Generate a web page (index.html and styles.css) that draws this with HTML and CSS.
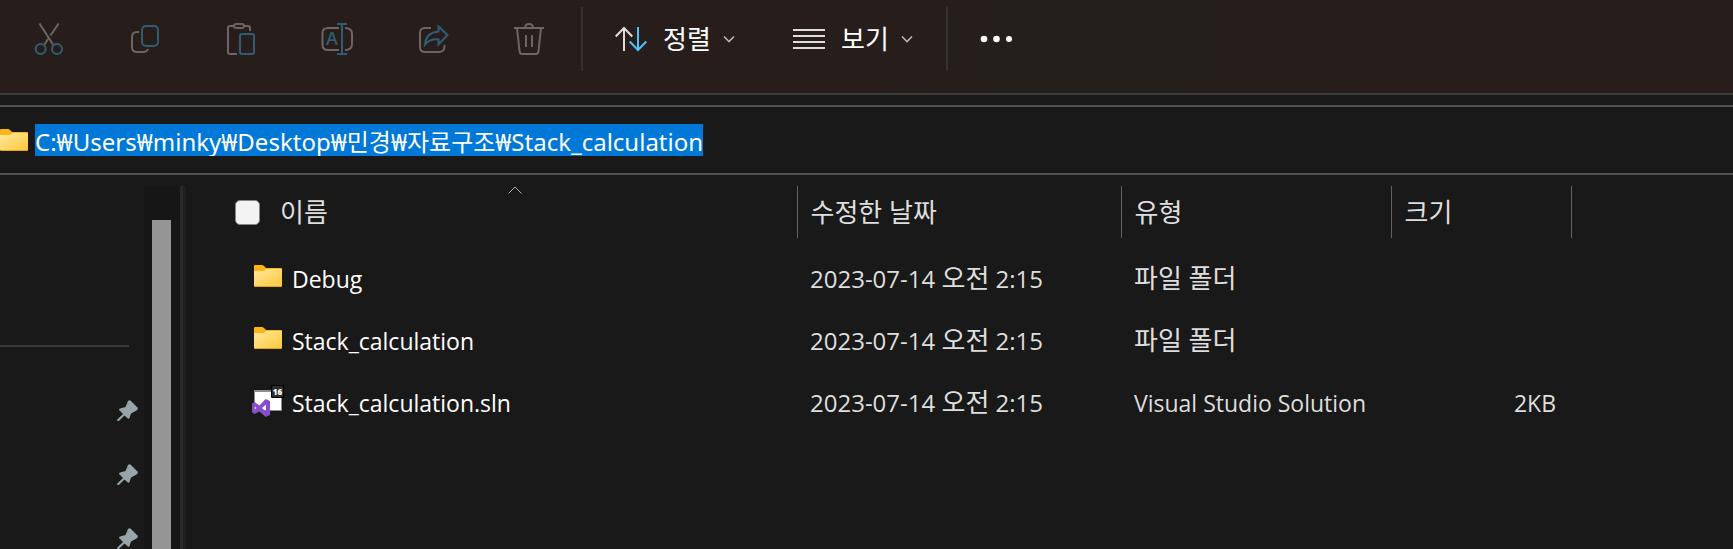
FILE: index.html
```html
<!DOCTYPE html>
<html lang="ko">
<head>
    <meta charset="UTF-8">
    <meta name="viewport" content="width=device-width, initial-scale=1.0">
    <title>Stack_calculation</title>
    <link rel="stylesheet" href="styles.css">
</head>
<body>

<!-- shared shapes -->
<svg class="defs" aria-hidden="true">
    <defs>
        <linearGradient id="folder-front" x1="0" y1="0" x2="1" y2="1">
            <stop offset="0" stop-color="#ffe8a0"/>
            <stop offset="1" stop-color="#ffc83a"/>
        </linearGradient>
        <symbol id="folder" viewBox="0 0 28 22">
            <path d="M0 1Q0 0 1 0H8Q9 0 10 1L12 3H27Q28 3 28 4V20H0Z" fill="#fdb515"/>
            <path d="M0 6H9Q10 6 11 5L12 4H28V21Q28 22 27 22H1Q0 22 0 21Z" fill="#e9a512"/>
            <path d="M0 6H9Q10 6 11 5L12 4H28V20.5Q28 21 27 21H1Q0 21 0 20.5Z" fill="url(#folder-front)"/>
        </symbol>
        <symbol id="pin" viewBox="0 0 22 22">
            <path d="M11 1Q12.5 -.6 14 1L20.500 7.500Q21.500 9 19.500 10.500L14 13.500L12.500 18Q11.800 19.500 10.500 18.300L7.500 15.500L2 20.800Q.6 21.500.2 20.500Q0 19.800.8 19L6 14L2.300 10.300Q1.500 9 3 8.500L8.500 7Z" fill="#98a4ab"/>
        </symbol>
        <symbol id="chevron" viewBox="0 0 12 8">
            <path d="M1 1.500L6 6.500L11 1.500" fill="none" stroke="#b9b5b4" stroke-width="1.600"/>
        </symbol>
    </defs>
</svg>

<header class="toolbar">
    <button class="tool" aria-label="잘라내기" disabled>
        <svg class="icon" viewBox="0 0 32 32">
            <path d="M6.500.5L20 21.500M25.700.5L17.500 12.500M15 16L11.500 21.500" class="gray"/>
            <circle cx="7.700" cy="26" r="5" class="blue"/>
            <circle cx="24" cy="26" r="5" class="blue"/>
        </svg>
    </button>
    <button class="tool" aria-label="복사" disabled>
        <svg class="icon" viewBox="0 0 32 32">
            <path d="M10 9H8Q3 9 3 14V24Q3 29 8 29H14Q18 29 19 26" class="gray"/>
            <rect x="13" y="3" width="16" height="20" rx="4" class="blue"/>
        </svg>
    </button>
    <button class="tool" aria-label="붙여넣기" disabled>
        <svg class="icon" viewBox="0 0 32 32">
            <path d="M9 3H5Q3 3 3 5V29Q3 31 5 31H12M19 3H23Q25 3 25 5V8" class="gray"/>
            <rect x="9" y="1" width="10" height="4" rx="2" class="gray"/>
            <rect x="15" y="11" width="14" height="20" rx="2" class="blue"/>
        </svg>
    </button>
    <button class="tool" aria-label="이름 바꾸기" disabled>
        <svg class="icon" viewBox="0 0 32 32">
            <path d="M18 5H7Q1.500 5 1.500 10V22Q1.500 27 7 27H18M24 5Q31 5 31 11V21Q31 27 24 27" class="gray"/>
            <path d="M21 1V31M16 1H26M16 31H26" class="blue"/>
            <text x="11" y="22" class="letter">A</text>
        </svg>
    </button>
    <button class="tool" aria-label="공유" disabled>
        <svg class="icon" viewBox="0 0 32 32">
            <path d="M14 5H8Q3 5 3 10V24Q3 29 8 29H22Q27 29 27.500 24V22" class="gray"/>
            <path d="M21.500 3.500L30.500 12L21.500 21.500V16.500Q13 15.500 8 21.500Q9 9.500 21.500 8.500Z" class="blue"/>
        </svg>
    </button>
    <button class="tool" aria-label="삭제" disabled>
        <svg class="icon" viewBox="0 0 32 32">
            <path d="M1 5H31M12 5Q12 1 16 1T20 5M4 5L6.500 28Q7 31 9 31H23Q25 31 25.500 28L28 5M13 12V24M19 12V24" class="gray"/>
        </svg>
    </button>
    <span class="separator"></span>
    <button class="menu">
        <svg class="icon" viewBox="0 0 32 32">
            <path d="M9 28V5.500M.7 13.500L9 5L17.300 13.500" class="light"/>
            <path d="M23 4V27M14.700 18.500L23 27L31.300 18.500" class="bright"/>
        </svg>
        <span class="menu-text">정렬</span>
        <svg class="chevron"><use href="#chevron"/></svg>
    </button>
    <button class="menu">
        <svg class="icon" viewBox="0 0 32 32">
            <path d="M0 7H32M0 13H32M0 19H32M0 25H32" class="light"/>
        </svg>
        <span class="menu-text">보기</span>
        <svg class="chevron"><use href="#chevron"/></svg>
    </button>
    <span class="separator"></span>
    <button class="menu" aria-label="더 보기">
        <svg class="icon" viewBox="0 0 32 32">
            <g fill="#fff">
                <circle cx="4" cy="16" r="3.300"/>
                <circle cx="16.500" cy="16" r="3.300"/>
                <circle cx="29" cy="16" r="3"/>
            </g>
        </svg>
    </button>
</header>

<div class="address">
    <svg class="folder"><use href="#folder"/></svg>
    <input class="path" type="text" aria-label="주소" spellcheck="false" value="C:₩Users₩minky₩Desktop₩민경₩자료구조₩Stack_calculation">
</div>

<main class="content">
    <nav class="sidebar" aria-label="탐색 창">
        <div class="pins">
            <hr class="line">
            <svg class="pin"><use href="#pin"/></svg>
            <svg class="pin"><use href="#pin"/></svg>
            <svg class="pin"><use href="#pin"/></svg>
        </div>
        <div class="scrollbar"><div class="thumb"></div></div>
    </nav>

    <div class="list">
        <table class="files">
            <colgroup>
                <col class="col-name">
                <col class="col-date">
                <col class="col-type">
                <col class="col-size">
            </colgroup>
            <thead>
                <tr>
                    <th>
                        <svg class="sort" viewBox="0 0 14 8"><path d="M.5 7.500L7 1L13.500 7.500" fill="none" stroke="#aaa"/></svg>
                        <div class="head-name">
                            <input class="check" type="checkbox" aria-label="모두 선택">
                            <span>이름</span>
                        </div>
                    </th>
                    <th>수정한 날짜</th>
                    <th>유형</th>
                    <th>크기</th>
                </tr>
            </thead>
            <tbody>
                <tr>
                    <td><div class="name"><svg class="folder"><use href="#folder"/></svg><span>Debug</span></div></td>
                    <td class="date">2023-07-14 <span class="ko">오전</span> 2:15</td>
                    <td><span class="ko">파일 폴더</span></td>
                    <td class="size"></td>
                </tr>
                <tr>
                    <td><div class="name"><svg class="folder"><use href="#folder"/></svg><span>Stack_calculation</span></div></td>
                    <td class="date">2023-07-14 <span class="ko">오전</span> 2:15</td>
                    <td><span class="ko">파일 폴더</span></td>
                    <td class="size"></td>
                </tr>
                <tr>
                    <td>
                        <div class="name">
                            <svg class="solution" viewBox="0 0 32 32">
                                <path d="M2 5H30V26H2Z" fill="#8b8d90"/>
                                <path d="M3 7H29V25H3Z" fill="#fff"/>
                                <path d="M13.500 14L18 16V30L13.500 32L7.500 26.500L2.500 29L0 27.500V18.500L2.500 17L7.500 20.500ZM14 19.500L10 23L14 26.500ZM2 21V25L4.500 23Z" fill="#864fc8" fill-rule="evenodd"/>
                                <rect x="19" y="0" width="13" height="13" rx="1" fill="#000"/>
                                <rect x="20" y="1" width="11" height="11" rx="1" fill="#2e2e2e"/>
                                <text x="25.500" y="9.500" class="badge">16</text>
                            </svg>
                            <span>Stack_calculation.sln</span>
                        </div>
                    </td>
                    <td class="date">2023-07-14 <span class="ko">오전</span> 2:15</td>
                    <td>Visual Studio Solution</td>
                    <td class="size">2KB</td>
                </tr>
            </tbody>
        </table>
    </div>
</main>

</body>
</html>
```
FILE: styles.css
```css
* {
    box-sizing: border-box;
}
body {
    display: flex;
    flex-direction: column;
    min-height: 100vh;
    margin: 0;
    background-color: #191919;
    color: #dedede;
    font-family: "Open Sans", "Noto Sans CJK KR", sans-serif;
    font-size: 24px;
}
button {
    display: flex;
    align-items: center;
    justify-content: center;
    padding: 0;
    border: none;
    background: none;
    color: #fff;
    font-family: inherit;
}
svg {
    display: block;
    flex-shrink: 0;
}
.defs {
    position: absolute;
    width: 0;
    height: 0;
}

/* toolbar */
.toolbar {
    display: flex;
    align-items: center;
    padding: 7px 1px 22px;
    border-bottom: 2px solid #3d3b3a;
    background: linear-gradient(100deg, #271e1c 50%, #241f1b 62%, #271e1b 80%);
}
.tool {
    width: 96px;
    height: 64px;
}
.menu {
    gap: 12px;
    height: 64px;
    padding: 0 29px;
}
.menu-text {
    width: 48px;
    margin-left: 4px;
    font-size: 26px;
    line-height: 32px;
    text-align: left;
    white-space: nowrap;
}
.icon {
    width: 32px;
    height: 32px;
    fill: none;
    stroke-width: 2;
}
.gray {
    stroke: #6c6563;
}
.blue {
    stroke: #305d76;
}
.light {
    stroke: #deddda;
}
.bright {
    stroke: #4cc2ff;
}
.letter {
    fill: #305d76;
    font-family: "Open Sans", sans-serif;
    font-size: 18px;
    font-weight: 600;
    text-anchor: middle;
}
.chevron {
    width: 12px;
    height: 8px;
}
.separator {
    width: 2px;
    height: 64px;
    margin: 0 3px 0 4px;
    background-color: #373030;
}

/* address bar */
.address {
    display: flex;
    align-items: center;
    height: 70px;
    margin-top: 10px;
    border-top: 2px solid #535353;
    border-bottom: 2px solid #535353;
}
.folder {
    width: 28px;
    height: 22px;
}
.path {
    field-sizing: content;
    height: 32px;
    margin-left: 7px;
    padding: 0;
    border: none;
    outline: none;
    background-color: #0078d7;
    color: #fff;
    font-family: "Noto Sans", "Noto Sans CJK KR", sans-serif;
    font-size: 24px;
}

/* content */
.content {
    display: flex;
    flex: 1;
    padding-top: 11px;
}
.sidebar {
    display: flex;
    width: 186px;
    border-right: 3px solid #1f1f1f;
}
.pins {
    display: flex;
    flex: 1;
    flex-direction: column;
    align-items: flex-end;
    gap: 42px;
    height: 360px;
    margin-bottom: -100px;
    padding: 159px 5px 0 0;
}
.line {
    width: 129px;
    margin: 0 10px 11px 0;
    border: none;
    border-top: 2px solid #393939;
}
.pin {
    width: 22px;
    height: 22px;
}
.scrollbar {
    width: 39px;
    padding: 34px 9px 0 8px;
    border-right: 3px solid #292929;
    background-color: #161616;
}
.thumb {
    width: 19px;
    height: 100%;
    background-color: #959595;
}
.list {
    flex: 1;
    padding-left: 46px;
}
.files {
    border-collapse: collapse;
    table-layout: fixed;
    width: 1339px;
}
.col-name {
    width: 565px;
}
.col-date {
    width: 324px;
}
.col-type {
    width: 270px;
}
.col-size {
    width: 180px;
}
th {
    position: relative;
    height: 52px;
    padding: 0 13px;
    border-right: 1px solid #636363;
    font-size: 26px;
    font-weight: normal;
    line-height: 32px;
    text-align: left;
}
th:first-child {
    padding-left: 3px;
}
tbody::before {
    content: "";
    display: block;
    height: 10px;
}
td {
    height: 62px;
    padding: 0 13px;
    font-size: 23px;
    line-height: 32px;
    white-space: nowrap;
}
td:first-child {
    padding-left: 20px;
    color: #fff;
}
.date {
    font-size: 24px;
}
.size {
    padding-right: 15px;
    text-align: right;
}
.ko {
    font-size: 26px;
    line-height: 30px;
}
.sort {
    position: absolute;
    top: 0;
    left: 50%;
    width: 14px;
    height: 8px;
    margin-left: -6px;
}
.head-name {
    display: flex;
    align-items: center;
    gap: 20px;
}
.check {
    appearance: none;
    width: 25px;
    height: 25px;
    margin: 0;
    border: 1px solid #868686;
    border-radius: 5px;
    background-color: #f3f3f3;
}
.name {
    display: flex;
    align-items: center;
    gap: 10px;
}
.name .folder {
    margin: 0 0 6px 2px;
}
.solution {
    width: 32px;
    height: 32px;
    margin: 0 -2px 4px 0;
}
.badge {
    fill: #fff;
    font-family: "Open Sans", sans-serif;
    font-size: 8px;
    font-weight: 800;
    text-anchor: middle;
}
```
